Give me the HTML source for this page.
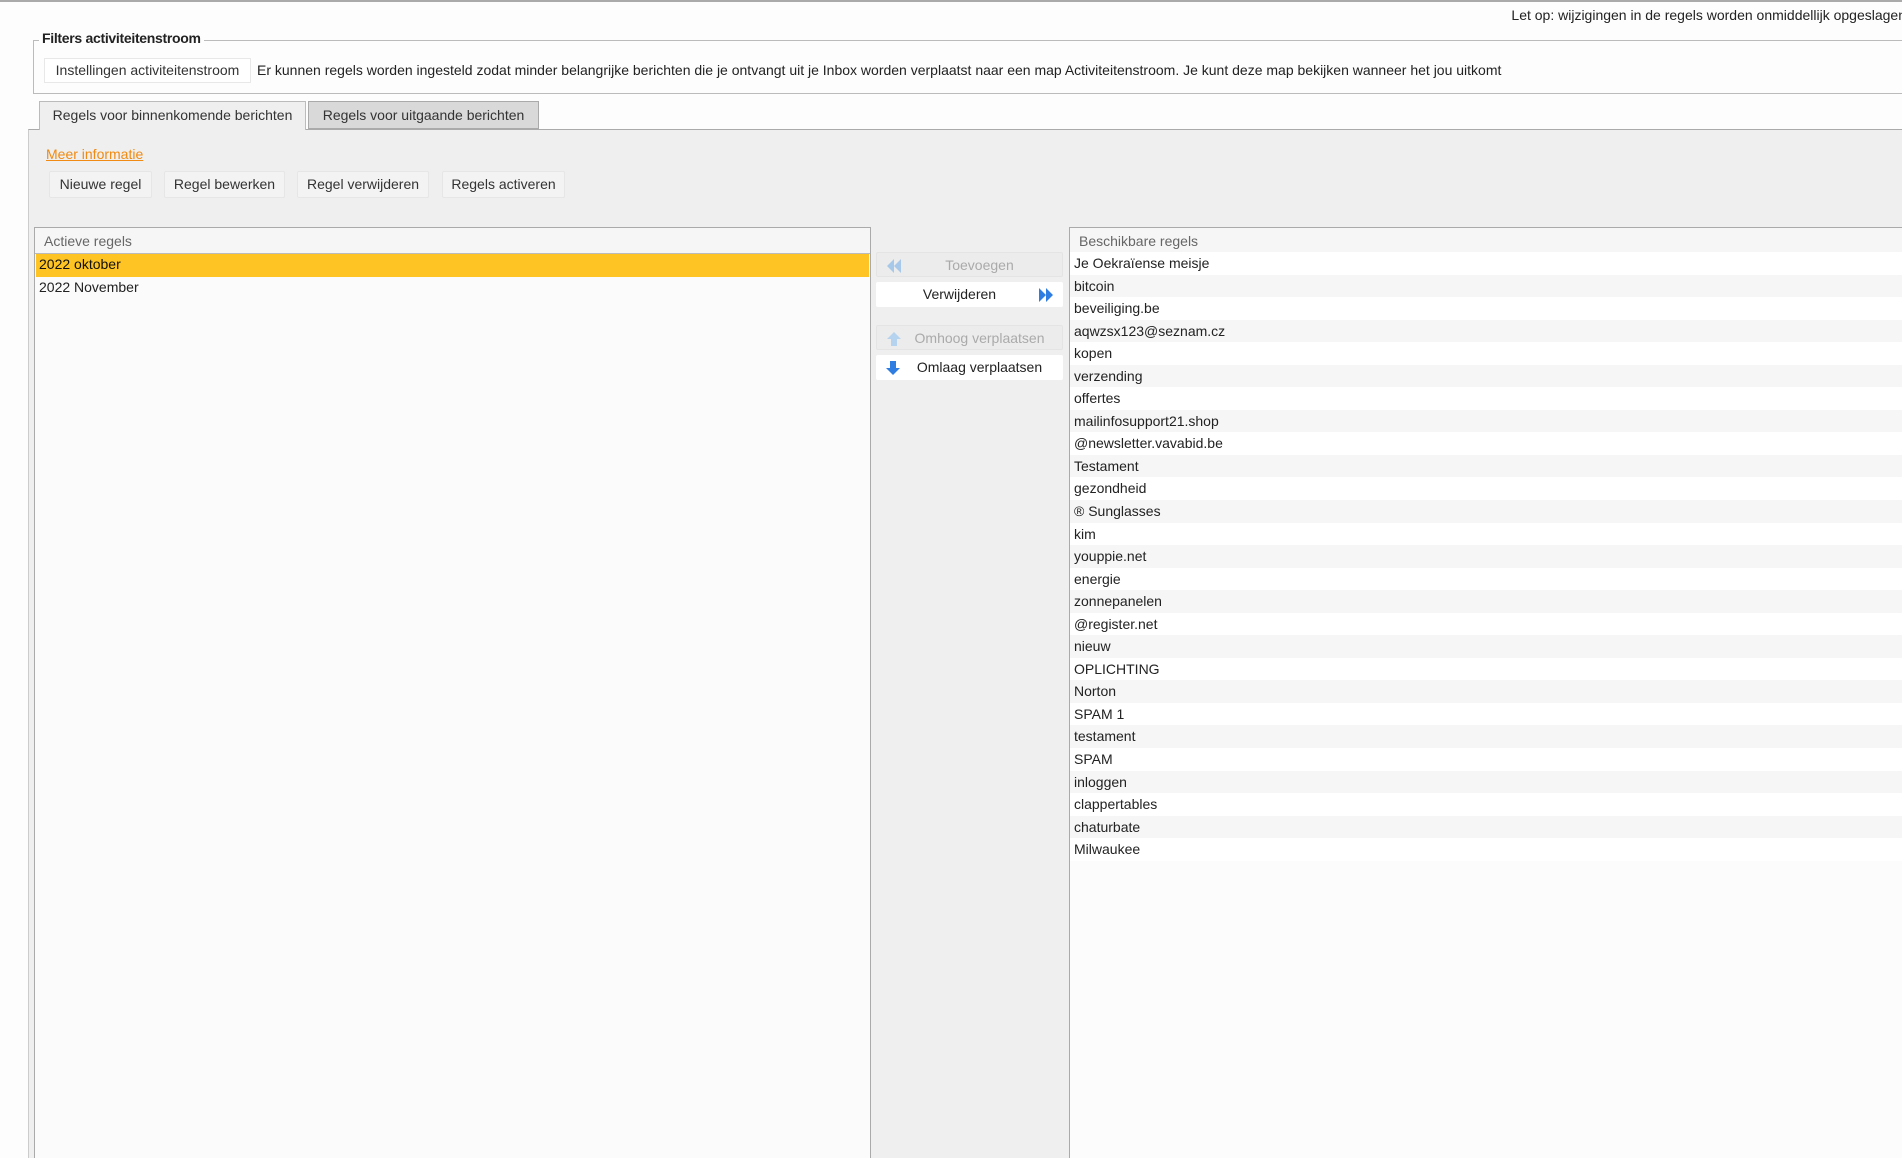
<!DOCTYPE html>
<html><head><meta charset="utf-8"><style>
*{box-sizing:border-box;margin:0;padding:0}
html,body{width:1902px;height:1158px;overflow:hidden}
body{background:#fdfdfd;font-family:"Liberation Sans",sans-serif;font-size:14px;color:#222}
#w{position:relative;width:1902px;height:1158px;overflow:hidden}
.a{position:absolute}
.btn{position:absolute;background:#f3f3f3;border:1px solid #e6e6e6;border-radius:2px;text-align:center;line-height:24px;color:#333}
.row{height:22.55px;line-height:22.55px;padding-left:4px;white-space:nowrap;color:#222}
.row:nth-child(even){background:#f6f6f6}
.row:nth-child(odd){background:#fff}
.mb{position:absolute;left:876px;width:187px;height:25px;line-height:25px;text-align:center;border-radius:2px}
</style></head><body><div id="w">
<div class="a" style="left:0;top:0;width:1902px;height:2px;background:#aaa"></div>
<div class="a" style="right:-4px;top:7px;white-space:nowrap">Let op: wijzigingen in de regels worden onmiddellijk opgeslagen</div>
<div class="a" style="left:33px;top:40px;width:1880px;height:54px;border:1px solid #bbb;border-right:none"></div>
<div class="a" style="left:39px;top:30px;background:#fdfdfd;padding:0 3px;font-weight:bold;font-size:14px;letter-spacing:-0.3px">Filters activiteitenstroom</div>
<div class="a" style="left:44px;top:58px;width:207px;height:25px;background:#fff;border:1px solid #e8e8e8;line-height:23px;text-align:center;color:#333">Instellingen activiteitenstroom</div>
<div class="a" style="left:257px;top:62px;white-space:nowrap">Er kunnen regels worden ingesteld zodat minder belangrijke berichten die je ontvangt uit je Inbox worden verplaatst naar een map Activiteitenstroom. Je kunt deze map bekijken wanneer het jou uitkomt</div>
<div class="a" style="left:28px;top:129px;width:1880px;height:1040px;background:#efefef;border-top:1px solid #aaa;border-left:1px solid #ccc"></div>
<div class="a" style="left:39px;top:101px;width:267px;height:29px;background:#efefef;border:1px solid #bbb;border-bottom:none;text-align:center;line-height:27px;color:#333">Regels voor binnenkomende berichten</div>
<div class="a" style="left:308px;top:101px;width:231px;height:28px;background:#d9d9d9;border:1px solid #aaa;text-align:center;line-height:27px;color:#333">Regels voor uitgaande berichten</div>
<div class="a" style="left:46px;top:146px;color:#f08a12;text-decoration:underline">Meer informatie</div>
<div class="btn" style="left:49px;top:171px;width:103px;height:27px">Nieuwe regel</div>
<div class="btn" style="left:164px;top:171px;width:121px;height:27px">Regel bewerken</div>
<div class="btn" style="left:297px;top:171px;width:132px;height:27px">Regel verwijderen</div>
<div class="btn" style="left:442px;top:171px;width:123px;height:27px">Regels activeren</div>

<div class="a" style="left:34px;top:227px;width:837px;height:940px;background:#fbfbfb;border:1px solid #aaa">
<div style="height:26px;line-height:26px;padding-left:9px;color:#666;border-bottom:1px solid #bbb;background:#f6f6f6">Actieve regels</div>
<div style="margin:0 1px"><div style="height:23px;line-height:21px;padding-left:3px;background:#fec424;color:#111">2022 oktober</div><div style="height:23px;line-height:21px;padding-left:3px;background:#fbfbfb">2022 November</div></div>
</div>

<div class="mb" style="top:252px;background:#ececec;border:1px solid #e4e4e4;color:#aaa;padding-left:20px"><svg class="a" style="left:8px;top:6px" width="18" height="14" viewBox="0 0 18 14"><path d="M9 0 L2 7 L9 14 L9 0Z M16 0 L9 7 L16 14Z" fill="#a8c8ea"/></svg>Toevoegen</div>
<div class="mb" style="top:282px;background:#fff;color:#222;padding-right:20px">Verwijderen<svg class="a" style="right:8px;top:6px" width="18" height="14" viewBox="0 0 18 14"><path d="M2 0 L9 7 L2 14Z M9 0 L16 7 L9 14Z" fill="#2f7de0"/></svg></div>
<div class="mb" style="top:325px;background:#ececec;border:1px solid #e4e4e4;color:#aaa;padding-left:20px">Omhoog verplaatsen<svg class="a" style="left:9px;top:5px" width="16" height="16" viewBox="0 0 16 16"><path d="M8 1 L15 8 L11 8 L11 15 L5 15 L5 8 L1 8Z" fill="#b5d2ee"/></svg></div>
<div class="mb" style="top:355px;background:#fff;color:#222;padding-left:20px">Omlaag verplaatsen<svg class="a" style="left:9px;top:5px" width="16" height="16" viewBox="0 0 16 16"><path d="M5 1 L11 1 L11 8 L15 8 L8 15 L1 8 L5 8Z" fill="#2f7de0"/></svg></div>

<div class="a" style="left:1069px;top:227px;width:840px;height:940px;background:#fcfcfc;border:1px solid #aaa">
<div style="height:26px;line-height:26px;padding-left:9px;color:#666;border-bottom:1px solid #bbb;background:#f6f6f6">Beschikbare regels</div>
<div style="margin-top:-2px">
<div class="row">Je Oekraïense meisje</div><div class="row">bitcoin</div><div class="row">beveiliging.be</div><div class="row">aqwzsx123@seznam.cz</div><div class="row">kopen</div><div class="row">verzending</div><div class="row">offertes</div><div class="row">mailinfosupport21.shop</div><div class="row">@newsletter.vavabid.be</div><div class="row">Testament</div><div class="row">gezondheid</div><div class="row">® Sunglasses</div><div class="row">kim</div><div class="row">youppie.net</div><div class="row">energie</div><div class="row">zonnepanelen</div><div class="row">@register.net</div><div class="row">nieuw</div><div class="row">OPLICHTING</div><div class="row">Norton</div><div class="row">SPAM 1</div><div class="row">testament</div><div class="row">SPAM</div><div class="row">inloggen</div><div class="row">clappertables</div><div class="row">chaturbate</div><div class="row">Milwaukee</div>
</div></div>
</div></body></html>
